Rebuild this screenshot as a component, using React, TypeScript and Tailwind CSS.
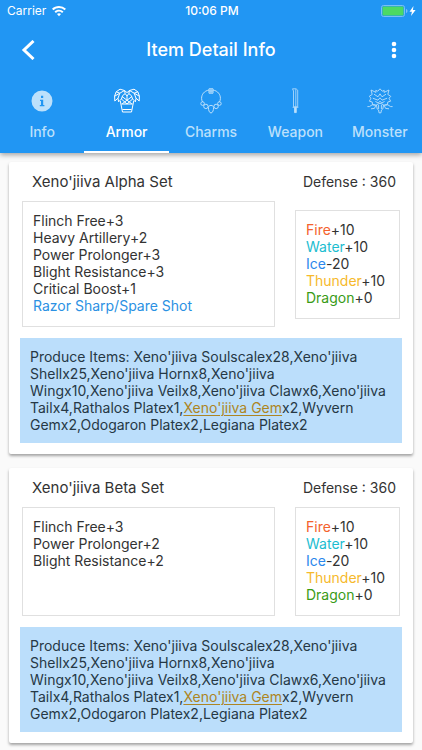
import React from 'react';

type Skill = { name: string; level?: string };

type ArmorSet = {
	name: string;
	defense: number;
	skills: Skill[];
};

const armorSets: ArmorSet[] = [
	{
		name: "Xeno'jiiva Alpha Set",
		defense: 360,
		skills: [
			{ name: 'Flinch Free', level: '+3' },
			{ name: 'Heavy Artillery', level: '+2' },
			{ name: 'Power Prolonger', level: '+3' },
			{ name: 'Blight Resistance', level: '+3' },
			{ name: 'Critical Boost', level: '+1' },
			{ name: 'Razor Sharp/Spare Shot' },
		],
	},
	{
		name: "Xeno'jiiva Beta Set",
		defense: 360,
		skills: [
			{ name: 'Flinch Free', level: '+3' },
			{ name: 'Power Prolonger', level: '+2' },
			{ name: 'Blight Resistance', level: '+2' },
		],
	},
];

const resistances = [
	{ name: 'Fire', value: '+10', color: 'text-[#f4622d]' },
	{ name: 'Water', value: '+10', color: 'text-[#1cbdd0]' },
	{ name: 'Ice', value: '-20', color: 'text-[#2b87ec]' },
	{ name: 'Thunder', value: '+10', color: 'text-[#f6b92c]' },
	{ name: 'Dragon', value: '+0', color: 'text-[#399b16]' },
];

const InfoIcon = () => (
	<svg viewBox="0 0 26 26" className="size-[26px]" fill="currentColor" aria-hidden="true">
		<path
			fillRule="evenodd"
			d="M13 2.500a10.500 10.500 0 1 0 0 21 10.500 10.500 0 0 0 0-21Zm-1 5.300h2.200v2.200H12V7.800Zm-1 4h3.200v5.200h1.200v1.200h-4.600V17h1.200v-4h-1v-1.200Z"
		/>
	</svg>
);

const ArmorIcon = () => (
	<svg
		viewBox="0 0 26 26"
		className="size-[26px]"
		fill="none"
		stroke="currentColor"
		strokeLinejoin="round"
		aria-hidden="true"
	>
		<path d="M10.500 2.500 6 1.200 2.200 3.800.6 8l.2 5L4 10.200l.6 3.600L7.400 11l1.200-3.400 2.600-2L10.500 2.500Z" />
		<path d="m15.500 2.500 4.500-1.300 3.800 2.600L25.400 8l-.2 5-3.200-2.800-.6 3.600-2.800-2.800-1.200-3.400-2.600-2 .7-3.100Z" />
		<path d="M10.500 2.500 13 4.600l2.500-2.100M11.200 5.600 13 8l1.800-2.400" />
		<path d="m6.300 13 2.200 11h9l2.200-11M7.400 16h11.200M8.500 21.500h9" />
		<path d="m8 8.500 9.800 7.300M18 8.500l-9.800 7.300M7.400 11 13 16l5.600-5M13 8v4" />
		<path d="m2.200 3.800 3.600 1.400 4.700-2.700M1 8l4.800-2.800L4 10.200M23.800 3.800l-3.600 1.400-4.700-2.700M25 8l-4.800-2.800 1.800 5" />
	</svg>
);

const CharmIcon = () => (
	<svg
		viewBox="0 0 26 26"
		className="size-[26px]"
		fill="none"
		stroke="currentColor"
		aria-hidden="true"
	>
		<path d="M11 2C6 3 3.600 6.500 3.600 10.300c0 1.600.4 2.700 1 3.700M15 2c5 1 7.400 4.500 7.400 8.300 0 1.600-.4 2.700-1 3.700" />
		<path d="M11 .8h4v4.400h-4zM11 3h4M13 .8V5" />
		<circle cx="4.600" cy="15.600" r="1.800" />
		<circle cx="7.900" cy="18.400" r="2.200" />
		<circle cx="21.400" cy="15.600" r="1.800" />
		<circle cx="18.100" cy="18.400" r="2.200" />
		<path d="M10.400 19.600c0-1.400 1-2.200 2.600-2.200s2.600.8 2.600 2.200c0 2.200-.9 5.400-2.600 5.400s-2.600-3.200-2.600-5.400Z" />
	</svg>
);

const WeaponIcon = () => (
	<svg
		viewBox="0 0 26 26"
		className="size-[26px]"
		fill="none"
		stroke="currentColor"
		strokeWidth="0.8"
		aria-hidden="true"
	>
		<path d="M10.500.8h3.600l1.600 1.400v16.600h-4.200V3L10.500.8ZM13.800 1.200v17.600" />
		<path d="M10.600 19.300h5.800" />
		<path d="M12.500 19.600h1.800v5h-1.800z" fill="currentColor" />
	</svg>
);

const MonsterIcon = () => (
	<svg
		viewBox="0 0 26 26"
		className="size-[26px]"
		fill="none"
		stroke="currentColor"
		strokeWidth="0.9"
		strokeLinejoin="round"
		aria-hidden="true"
	>
		<path d="m13 .8-2.200 2.400-2-.8.2 2L4 2l1.200 4.400-3 2 1.800 1.800-1.600 3 2.800.8.400 2.600 2.800.4M13 .8l2.200 2.400 2-.8-.2 2L22 2l-1.200 4.400 3 2-1.800 1.800 1.600 3-2.800.8-.4 2.600-2.800.4" />
		<path d="m7 6.200 4 2.600 2-3 2 3 4-2.600M5.800 10.200l5.200 2 2-2.400 2 2.400 5.200-2M8.400 13.400l2.800 1.600 1.800-1.800 1.800 1.800 2.800-1.600" />
		<path d="M9.400 16.800 13 15.200l3.600 1.600-.8 4.200-1.400 1-.4 2.800h-2l-.4-2.800-1.400-1-.8-4.200ZM11.600 17v4M14.400 17v4" />
		<path d="M.4 18.600h2l2.800-1.800 3.800.4-1.600 3.200-3.400.4M25.600 18.600h-2l-2.800-1.800-3.800.4 1.600 3.200 3.400.4" />
	</svg>
);

const tabs = [
	{ label: 'Info', icon: <InfoIcon /> },
	{ label: 'Armor', icon: <ArmorIcon /> },
	{ label: 'Charms', icon: <CharmIcon /> },
	{ label: 'Weapon', icon: <WeaponIcon /> },
	{ label: 'Monster', icon: <MonsterIcon /> },
];

const StatusBar = () => (
	<div className="grid h-[22px] grid-cols-3 items-center pl-[7px] pr-[5px] text-xs">
		<div className="flex items-center gap-[6px]">
			<span>Carrier</span>
			<svg viewBox="0 0 14 11" className="h-[11px] w-[14px]" fill="currentColor" aria-hidden="true">
				<path d="M7 0C4.300 0 1.900 1 0 2.700l1.400 1.500a8.200 8.200 0 0 1 11.200 0L14 2.700A10.400 10.400 0 0 0 7 0Z" />
				<path d="M7 3.700c-1.700 0-3.300.7-4.500 1.700L3.900 6.900a4.600 4.600 0 0 1 6.200 0l1.400-1.500A6.700 6.700 0 0 0 7 3.700Z" />
				<path d="M7 7.200c-.8 0-1.500.3-2 .8l2 2.200L9 8c-.5-.5-1.200-.8-2-.8Z" />
			</svg>
		</div>
		<span className="text-center font-medium">10:06 PM</span>
		<svg viewBox="0 0 36 12" className="h-3 w-9 justify-self-end" aria-hidden="true">
			<rect x="0.500" y="0.500" width="23" height="11" rx="2" fill="none" stroke="#7abef8" />
			<rect x="1.500" y="1.500" width="21" height="9" rx="1" fill="#4cd964" />
			<path d="M25 4c1 .3 1.500 1 1.500 2S26 7.700 25 8V4Z" fill="#7abef8" />
			<path d="m32.500 1-4 5.700h2.400L30 11l4.600-6h-2.700l.6-4Z" fill="white" />
		</svg>
	</div>
);

const Header = () => (
	<header className="sticky top-0 bg-[#2196f3] text-white shadow-[0_2px_5px_rgba(0,0,0,0.35)]">
		<StatusBar />
		<div className="flex h-[55px] items-center justify-between px-4">
			<button type="button" aria-label="Back" className="flex w-6 justify-center">
				<svg viewBox="0 0 14 20" className="h-5 w-[14px]" fill="none" stroke="currentColor" strokeWidth="3" aria-hidden="true">
					<path d="M12.500 1 3 10l9.500 9" />
				</svg>
			</button>
			<h1 className="text-lg font-medium">Item Detail Info</h1>
			<button type="button" aria-label="More" className="flex w-6 justify-center">
				<svg viewBox="0 0 6 18" className="h-[18px] w-[6px]" fill="currentColor" aria-hidden="true">
					<circle cx="3" cy="3" r="2.300" />
					<circle cx="3" cy="9" r="2.300" />
					<circle cx="3" cy="15" r="2.300" />
				</svg>
			</button>
		</div>
		<nav className="flex">
			{tabs.map(({ label, icon }) => (
				<button
					key={label}
					type="button"
					className={`flex h-[76px] flex-1 basis-0 flex-col items-center gap-2 border-b-2 pt-[11px] text-sm font-medium ${
						label === 'Armor' ? 'border-white text-white' : 'border-transparent text-[#bce0fb]'
					}`}
				>
					{icon}
					{label}
				</button>
			))}
		</nav>
	</header>
);

const ArmorCard: React.FC<{ set: ArmorSet }> = ({ set }) => (
	<section className="rounded-[2px] bg-white px-[11px] pb-[11px] shadow-[0_2px_3px_rgba(0,0,0,0.35)]">
		<div className="flex h-[39px] items-center justify-between pl-3 pr-[6px]">
			<h2 className="text-[15px]">{set.name}</h2>
			<span>Defense : {set.defense}</span>
		</div>
		<div className="flex items-center gap-5 px-[2px]">
			<ul className="min-h-[109px] flex-1 border border-[#e0e0e0] px-[10px] pb-3 pt-[10px]">
				{set.skills.map(({ name, level }) => (
					<li key={name} className={level ? '' : 'text-[#2b91e3]'}>
						{name}
						{level}
					</li>
				))}
			</ul>
			<ul className="w-[105px] border border-[#e0e0e0] px-[10px] pb-3 pt-[10px]">
				{resistances.map(({ name, value, color }) => (
					<li key={name} className="whitespace-nowrap">
						<span className={color}>{name}</span>
						{value}
					</li>
				))}
			</ul>
		</div>
		<p className="mt-[11px] bg-[#bbdefb] p-[10px] text-[#263845]">
			Produce Items: Xeno'jiiva Soulscalex28,Xeno'jiiva Shellx25,Xeno'jiiva Hornx8,Xeno'jiiva
			Wingx10,Xeno'jiiva Veilx8,Xeno'jiiva Clawx6,Xeno'jiiva Tailx4,Rathalos Platex1,
			<a href="#gem" className="text-[#ad8523] underline underline-offset-2">
				Xeno'jiiva Gem
			</a>
			x2,Wyvern Gemx2,Odogaron Platex2,Legiana Platex2
		</p>
	</section>
);

const App: React.FC = () => (
	<div className="min-h-screen bg-[#fafafa] font-['Inter',sans-serif] text-sm text-[#333333]">
		<Header />
		<main className="flex flex-col gap-[14px] px-[9px] pb-[7px] pt-[9px] leading-[17px]">
			{armorSets.map((set) => (
				<ArmorCard key={set.name} set={set} />
			))}
		</main>
	</div>
);

export default App;
